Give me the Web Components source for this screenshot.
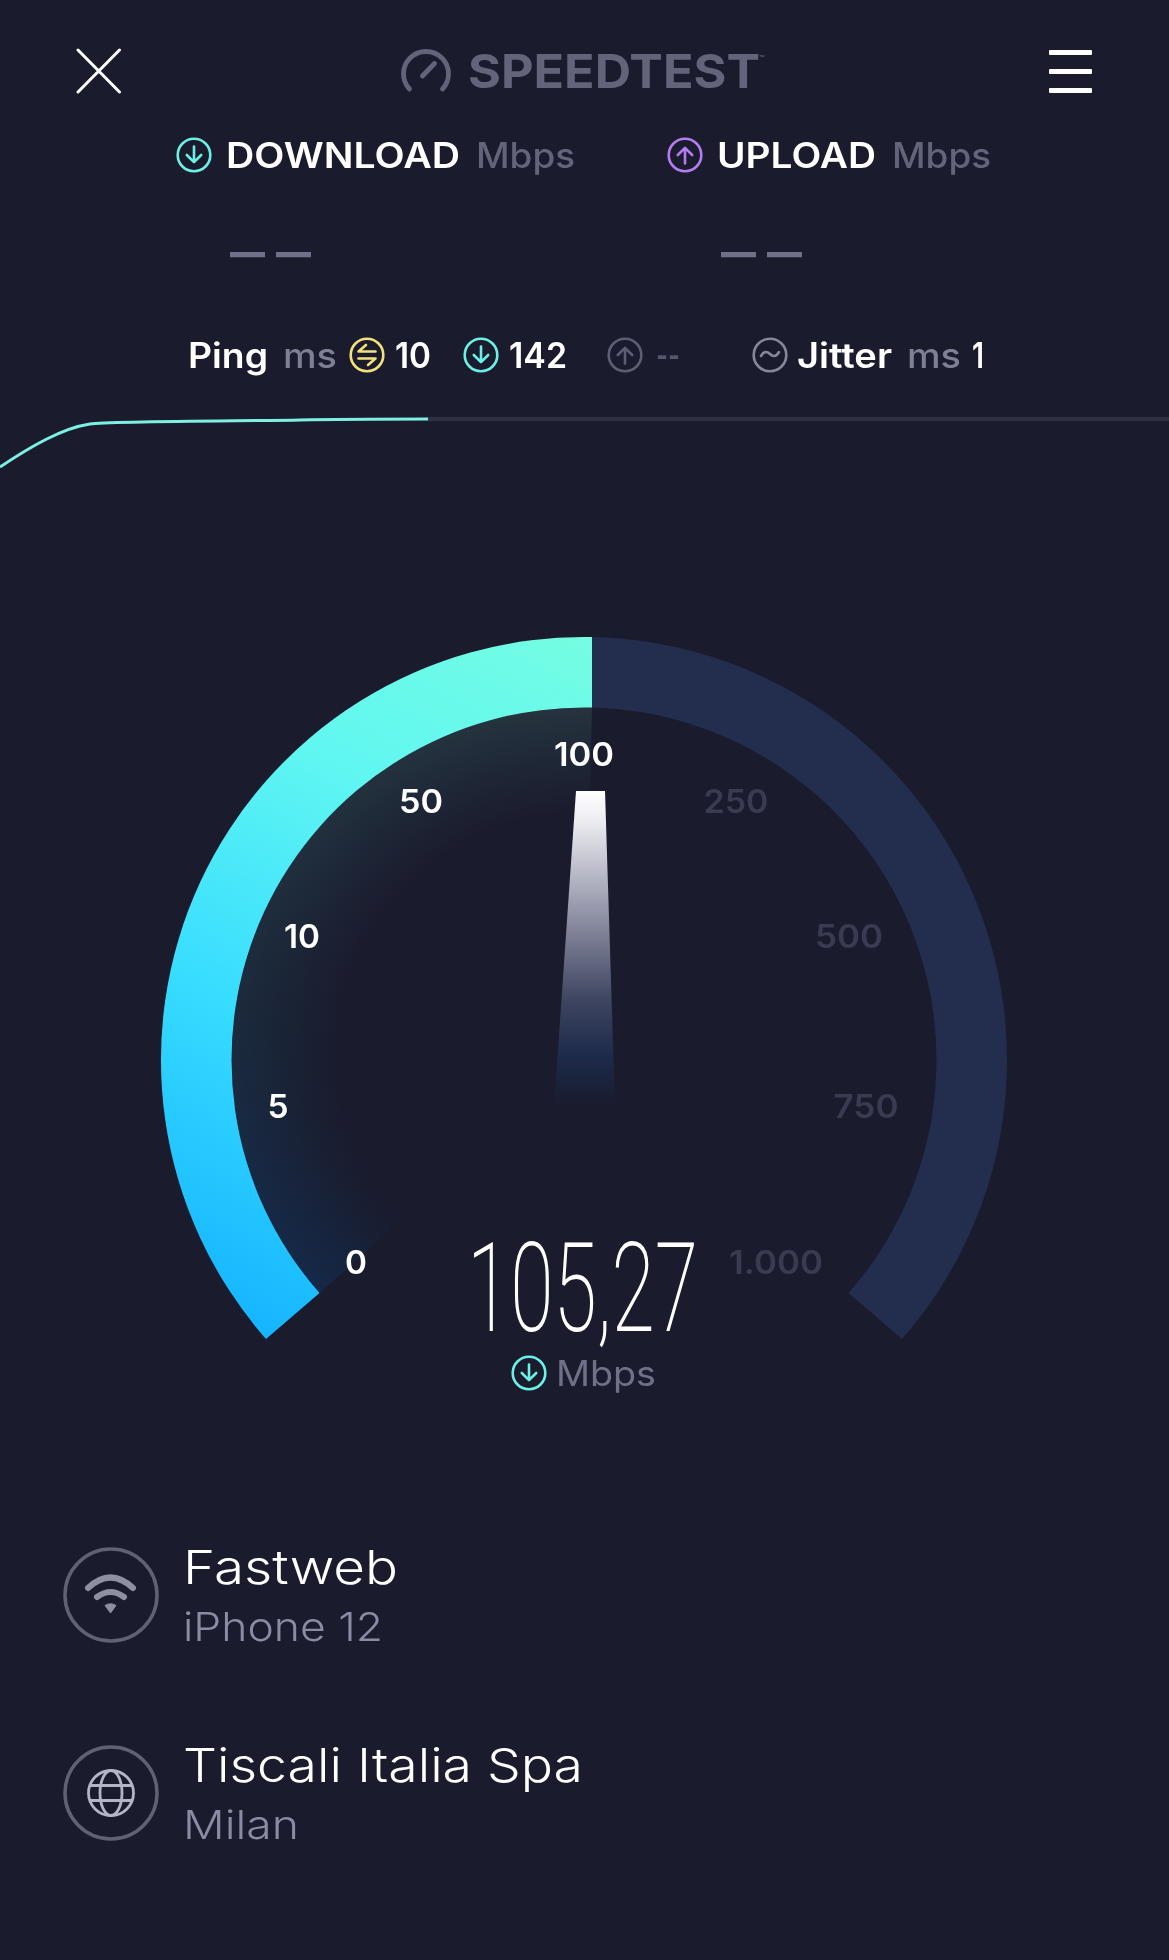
<!DOCTYPE html>
<html lang="en">
<head>
<meta charset="utf-8">
<title>Speedtest</title>
<style>
  html, body { margin: 0; background: #1a1b2d; }
  body { font-family: Inter, "Liberation Sans", sans-serif; }
  speed-info { margin-top: 102px; }
  speed-info:first-of-type { margin-top: 147px; }
</style>
</head>
<body>
<speed-app>
  <speed-header></speed-header>
  <speed-results></speed-results>
  <speed-metrics></speed-metrics>
  <speed-graph></speed-graph>
  <speed-gauge value="105,27" unit="Mbps"></speed-gauge>
  <speed-info kind="wifi" name="Fastweb" name-w="215" detail="iPhone 12" detail-w="200"></speed-info>
  <speed-info kind="globe" name="Tiscali Italia Spa" name-w="400" detail="Milan" detail-w="116"></speed-info>
</speed-app>

<script>
const ICONS = {
  down: `<path d="M18 9.500V25M10.800 18 18 25.200 25.200 18"/>`,
  up: `<path d="M18 26.500V11M10.800 18 18 10.800 25.200 18"/>`,
  ping: `<path d="M26.500 14.500H9.500l7.500-6.500M9.500 21.500H26.500l-7.500 6.500"/>`,
  jitter: `<path d="M9 19c3-5 6-5 9-2s6 3 9-2"/>`
};

// the reference font is wider than anything installed, so text is stretched to its measured width
class FitText extends HTMLElement {
  constructor() {
    super();
    this.attachShadow({ mode: "open" });
    this.shadowRoot.innerHTML = `
      <style>
        :host { display: inline-block; white-space: nowrap; }
        span { display: inline-block; transform-origin: 0 50%; }
      </style>
      <span><slot></slot></span>
    `;
  }
  connectedCallback() {
    const w = Number(this.getAttribute("w"));
    const span = this.shadowRoot.querySelector("span");
    this.style.width = w + "px";
    span.style.transform = "scaleX(" + w / span.getBoundingClientRect().width + ")";
  }
}
customElements.define("fit-text", FitText);

class RoundIcon extends HTMLElement {
  constructor() {
    super();
    this.attachShadow({ mode: "open" });
  }
  connectedCallback() {
    const color = this.getAttribute("color") || "#fff";
    const kind = this.getAttribute("kind");
    this.shadowRoot.innerHTML = `
      <style>
        :host { display: block; width: 36px; height: 36px; flex: none; }
        svg { display: block; }
      </style>
      <svg width="36" height="36" viewBox="0 0 36 36" fill="none" stroke="${color}" stroke-width="2.6" stroke-linecap="round" stroke-linejoin="round">
        <circle cx="18" cy="18" r="16.300"/>
        ${ICONS[kind]}
      </svg>
    `;
  }
}
customElements.define("round-icon", RoundIcon);

class SpeedApp extends HTMLElement {
  constructor() {
    super();
    this.attachShadow({ mode: "open" });
    this.shadowRoot.innerHTML = `
      <style>
        :host { display: flex; flex-direction: column; width: 1169px; height: 1960px; background: #1a1b2d; overflow: hidden; }
      </style>
      <slot></slot>
    `;
  }
}
customElements.define("speed-app", SpeedApp);

class SpeedHeader extends HTMLElement {
  constructor() {
    super();
    this.attachShadow({ mode: "open" });
  }
  connectedCallback() {
    this.shadowRoot.innerHTML = `
      <style>
        :host { display: flex; align-items: center; height: 46px; padding: 48px 77px 0 76px; }
        .logo { display: flex; align-items: center; gap: 17px; margin-left: 279px; color: #62647a; font: 700 47px/46px Inter, sans-serif; }
        .logo sup { font-size: 9px; line-height: 9px; align-self: flex-start; margin: 6px 0 0 -18px; font-weight: 400; }
        svg { display: block; }
        .bars { display: flex; flex-direction: column; gap: 14px; width: 43px; margin-left: auto; }
        .bars i { display: block; height: 5px; background: #fff; border-radius: 1px; }
      </style>
      <svg width="46" height="46" viewBox="0 0 46 46" fill="none" stroke="#fff" stroke-width="3" stroke-linecap="round">
        <path d="M2 44 43.500 2M43.500 44 2 2"/>
      </svg>
      <div class="logo">
        <svg width="50" height="44" viewBox="0 0 50 44" fill="none" stroke="#62647a" stroke-width="4.800" stroke-linecap="round">
          <path d="M8.500 40C4.800 36 2.500 30.500 2.500 24.800 2.500 12.500 12.500 2.500 25 2.500s22.500 10 22.500 22.300c0 5.700-2.300 11.200-6 15.200"/>
          <path d="M21.500 27 33.500 14.500"/>
        </svg>
        <fit-text w="292">SPEEDTEST</fit-text><sup>™</sup>
      </div>
      <div class="bars"><i></i><i></i><i></i></div>
    `;
  }
}
customElements.define("speed-header", SpeedHeader);

class SpeedResults extends HTMLElement {
  constructor() {
    super();
    this.attachShadow({ mode: "open" });
  }
  connectedCallback() {
    this.shadowRoot.innerHTML = `
      <style>
        :host { display: grid; grid-template-columns: 491px 1fr; row-gap: 57px; margin-top: 43px; padding-left: 176px; font: 600 35px/36px Inter, sans-serif; color: #fff; }
        .head { display: flex; align-items: center; }
        .label { margin-left: 14px; }
        .unit { margin-left: 16px; color: #62647a; font-weight: 500; }
        .dash { display: flex; gap: 11px; padding-left: 54px; font: 700 44px/44px Inter, sans-serif; color: #6f7188; height: 44px; }
      </style>
      <div class="head"><round-icon kind="down" color="#6cf0e6"></round-icon><fit-text class="label" w="234">DOWNLOAD</fit-text><fit-text class="unit" w="99">Mbps</fit-text></div>
      <div class="head"><round-icon kind="up" color="#b47cf0"></round-icon><fit-text class="label" w="159">UPLOAD</fit-text><fit-text class="unit" w="99">Mbps</fit-text></div>
      <div class="dash"><fit-text w="35">—</fit-text><fit-text w="35">—</fit-text></div>
      <div class="dash"><fit-text w="35">—</fit-text><fit-text w="35">—</fit-text></div>
    `;
  }
}
customElements.define("speed-results", SpeedResults);

class SpeedMetrics extends HTMLElement {
  constructor() {
    super();
    this.attachShadow({ mode: "open" });
  }
  connectedCallback() {
    this.shadowRoot.innerHTML = `
      <style>
        :host { display: flex; align-items: center; height: 36px; margin-top: 63px; padding-left: 188px; font: 600 35px/36px Inter, sans-serif; color: #fff; }
        .g { color: #7d7f95; font-weight: 500; }
        .off { color: #55576c; }
        round-icon { margin-right: 10px; }
      </style>
      <fit-text w="80">Ping</fit-text>
      <fit-text w="54" class="g" style="margin-left:15px">ms</fit-text>
      <round-icon kind="ping" color="#f3e27c" style="margin-left:12px"></round-icon>
      <fit-text w="36">10</fit-text>
      <round-icon kind="down" color="#6cf0e6" style="margin-left:32px"></round-icon>
      <fit-text w="58">142</fit-text>
      <round-icon kind="up" color="#5c5e73" style="margin-left:40px;margin-right:13px"></round-icon>
      <fit-text w="24" class="off">--</fit-text>
      <round-icon kind="jitter" color="#85879b" style="margin-left:72px;margin-right:9px"></round-icon>
      <fit-text w="95">Jitter</fit-text>
      <fit-text w="54" class="g" style="margin-left:15px">ms</fit-text>
      <fit-text w="12" style="margin-left:11px">1</fit-text>
    `;
  }
}
customElements.define("speed-metrics", SpeedMetrics);

class SpeedGraph extends HTMLElement {
  constructor() {
    super();
    this.attachShadow({ mode: "open" });
  }
  connectedCallback() {
    this.shadowRoot.innerHTML = `
      <style>
        :host { display: block; height: 80px; margin-top: 28px; }
        svg { display: block; }
      </style>
      <svg width="1169" height="80" viewBox="0 401 1169 80" fill="none">
        <path d="M428 419H1169" stroke="#2f3041" stroke-width="4.500"/>
        <path d="M0 467C30 447 62 428 90 424 C110 421 250 421 300 420 C340 419 390 419 428 419" stroke="#7df0e4" stroke-width="3"/>
      </svg>
    `;
  }
}
customElements.define("speed-graph", SpeedGraph);

class GaugeTick extends HTMLElement {
  constructor() {
    super();
    this.attachShadow({ mode: "open" });
    this.shadowRoot.innerHTML = `
      <style>
        :host { position: absolute; transform: translate(-50%, -50%); font: 600 33px/36px Inter, sans-serif; color: #fff; white-space: nowrap; }
        :host([off]) { color: #393b50; }
      </style>
      <slot></slot>
    `;
  }
}
customElements.define("gauge-tick", GaugeTick);

class SpeedGauge extends HTMLElement {
  constructor() {
    super();
    this.attachShadow({ mode: "open" });
  }
  connectedCallback() {
    const value = this.getAttribute("value");
    const unit = this.getAttribute("unit");
    // gauge coordinates are page coordinates minus the 620 top of this box
    const ticks = [
      ["100", 584, 134, 60], ["50", 421, 181, 44], ["10", 302, 316, 36], ["5", 278, 486, 21], ["0", 356, 642, 22],
      ["250", 736, 181, 65, 1], ["500", 849, 316, 68, 1], ["750", 866, 486, 65, 1], ["1.000", 776, 642, 94, 1]
    ];
    this.shadowRoot.innerHTML = `
      <style>
        :host { display: block; position: relative; width: 1169px; height: 780px; margin-top: 139px; }
        svg { display: block; }
        .value { position: absolute; left: 467px; top: 624px; height: 90px; font: 200 124px/90px Roboto, sans-serif; color: #fff; }
        .unit { position: absolute; left: 511px; top: 735px; display: flex; align-items: center; gap: 9px; font: 400 35px/36px Inter, sans-serif; color: #6f7187; }
      </style>
      <svg width="1169" height="780" viewBox="0 620 1169 780" fill="none">
        <defs>
          <linearGradient id="arc" gradientUnits="userSpaceOnUse" x1="592" y1="637" x2="220" y2="1340">
            <stop offset="0" stop-color="#74fde2"/>
            <stop offset="0.3" stop-color="#5ff6f2"/>
            <stop offset="0.62" stop-color="#37dcff"/>
            <stop offset="1" stop-color="#12b2ff"/>
          </linearGradient>
          <linearGradient id="glowColor" gradientUnits="userSpaceOnUse" x1="0" y1="707" x2="0" y2="1293">
            <stop offset="0" stop-color="#26343f"/>
            <stop offset="0.5" stop-color="#1c2b3d"/>
            <stop offset="1" stop-color="#14294a"/>
          </linearGradient>
          <radialGradient id="fade" gradientUnits="userSpaceOnUse" cx="584" cy="1060" r="353">
            <stop offset="0.68" stop-color="#000"/>
            <stop offset="1" stop-color="#fff"/>
          </radialGradient>
          <mask id="glowMask" maskUnits="userSpaceOnUse" x="0" y="620" width="1169" height="780">
            <rect x="0" y="620" width="1169" height="780" fill="url(#fade)"/>
          </mask>
          <linearGradient id="needle" x1="0" y1="0" x2="0" y2="1">
            <stop offset="0" stop-color="#ffffff"/>
            <stop offset="0.08" stop-color="#f0f0f4"/>
            <stop offset="0.4" stop-color="#8e90a4"/>
            <stop offset="0.66" stop-color="#3e4560"/>
            <stop offset="0.84" stop-color="#1c2a4a"/>
            <stop offset="1" stop-color="#1a1b2d"/>
          </linearGradient>
        </defs>
        <path d="M584 1060 319.500 1293A352.500 352.500 0 0 1 592 707.600Z" fill="url(#glowColor)" mask="url(#glowMask)"/>
        <path d="M266 1339A423 423 0 0 1 592 637.100V707.600A352.500 352.500 0 0 0 319.500 1293Z" fill="url(#arc)"/>
        <path d="M592 637.100A423 423 0 0 1 902 1339L848.500 1293A352.500 352.500 0 0 0 592 707.600Z" fill="#232d4d"/>
        <path d="M576 791H605L615 1107H554Z" fill="url(#needle)"/>
      </svg>
      ${ticks.map(t => `<gauge-tick ${t[4] ? "off" : ""} style="left:${t[1]}px;top:${t[2]}px"><fit-text w="${t[3]}">${t[0]}</fit-text></gauge-tick>`).join("")}
      <div class="value"><fit-text w="231">${value}</fit-text></div>
      <div class="unit"><round-icon kind="down" color="#6cf0e6"></round-icon><fit-text w="100">${unit}</fit-text></div>
    `;
  }
}
customElements.define("speed-gauge", SpeedGauge);

class SpeedInfo extends HTMLElement {
  constructor() {
    super();
    this.attachShadow({ mode: "open" });
  }
  connectedCallback() {
    const glyph = this.getAttribute("kind") === "wifi"
      ? `<g stroke="#8e8fa0" stroke-width="6" stroke-linecap="round" fill="none">
           <path d="M25 41Q47.500 20 70 41"/><path d="M34 50Q47.500 40 61 50"/>
         </g>
         <path d="M42 58.500Q47.500 55 53 58.500L47.500 66Z" fill="#8e8fa0" stroke="#8e8fa0" stroke-width="1" stroke-linejoin="round"/>`
      : `<g stroke="#b4b5c4" stroke-width="2.800" fill="none">
           <circle cx="48" cy="48" r="22.500"/><ellipse cx="48" cy="48" rx="11" ry="22.500"/><path d="M27 40.500h42M27 55.500h42"/>
         </g>`;
    this.shadowRoot.innerHTML = `
      <style>
        :host { display: flex; align-items: center; gap: 24px; height: 96px; margin-left: 63px; }
        svg { display: block; flex: none; }
        .name { font: 300 47px/50px Inter, sans-serif; color: #fff; }
        .detail { font: 300 40px/44px Inter, sans-serif; color: #8a8ca3; margin-top: 13px; }
      </style>
      <svg width="96" height="96" viewBox="0 0 96 96" fill="none">
        <circle cx="48" cy="48" r="46" stroke="#5f6175" stroke-width="3.500"/>
        ${glyph}
      </svg>
      <div>
        <div class="name"><fit-text w="${this.getAttribute("name-w")}">${this.getAttribute("name")}</fit-text></div>
        <div class="detail"><fit-text w="${this.getAttribute("detail-w")}">${this.getAttribute("detail")}</fit-text></div>
      </div>
    `;
  }
}
customElements.define("speed-info", SpeedInfo);
</script>
</body>
</html>
